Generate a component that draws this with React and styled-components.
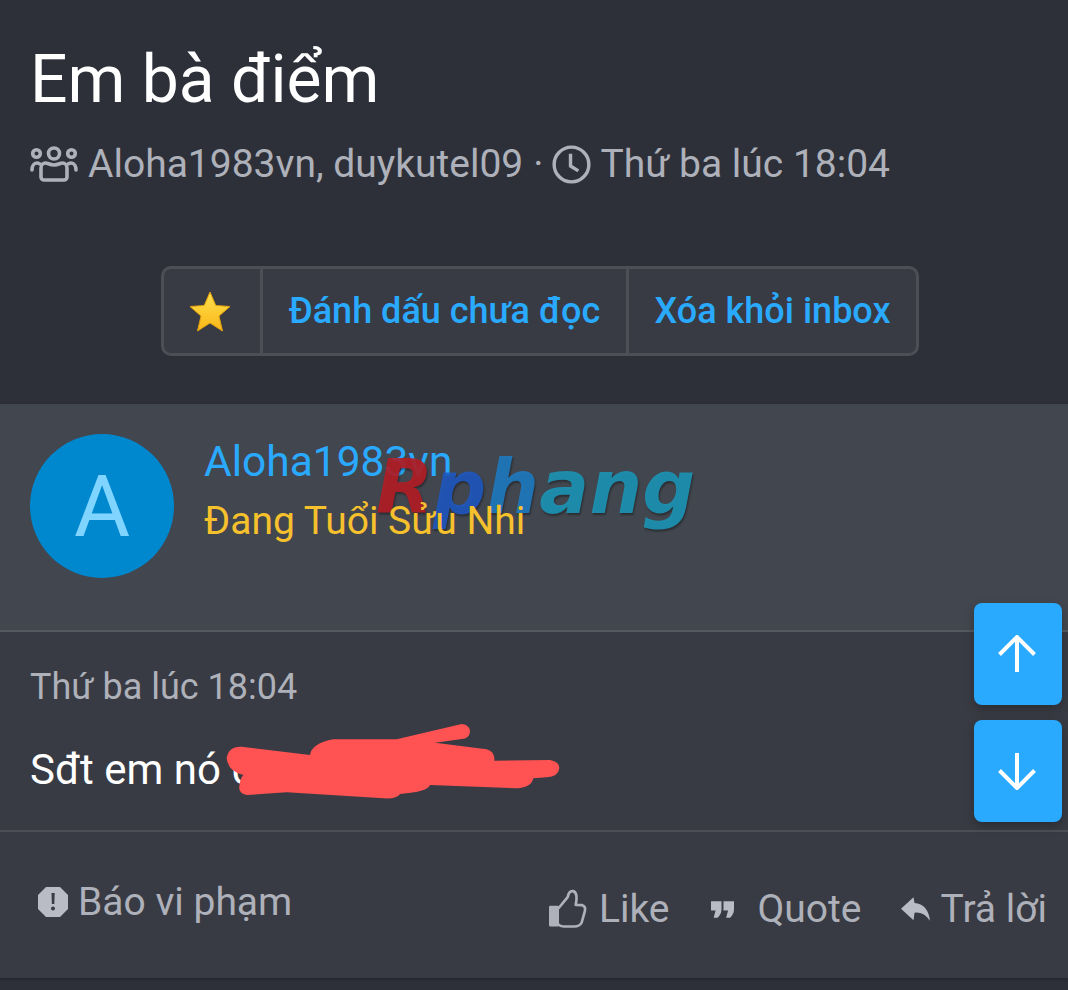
import React from 'react';
import styled, { createGlobalStyle } from 'styled-components';

const Global = createGlobalStyle`
  html, body { margin: 0; padding: 0; background: #24262b; }
  body { font-family: Roboto, "Noto Sans", sans-serif; }
`;
const Page = styled.div`
  width: 1068px; height: 990px; overflow: hidden; position: relative;
  background: #2d3039;
`;
const Header = styled.header`
  height: 404px; box-sizing: border-box; padding: 38px 30px 0 30px;
`;
const Title = styled.h1`
  margin: 0; font-size: 66px; line-height: 84px; font-weight: 400; color: #fff;
`;
const Meta = styled.div`
  margin-top: 17px; display: flex; align-items: center; gap: 10px;
  font-size: 39px; line-height: 50px; color: #aeb1b9;
`;
const Dot = styled.span` margin-right: -2px; `;
const Buttons = styled.div`
  margin: 77px 0 0 131px; width: 758px; height: 90px; box-sizing: border-box;
  display: flex; border: 3px solid #4c4f56; border-radius: 10px; background: #383b43;
`;
const StarCell = styled.div`
  width: 99px; padding-right: 5px; display: flex; align-items: center; justify-content: center;
  border-right: 3px solid #4c4f56; box-sizing: border-box;
`;
const LinkCell = styled.a`
  display: flex; align-items: center; justify-content: center; box-sizing: border-box;
  width: ${p => p.$w}px; color: #2aaaff; font-size: 36px; font-weight: 500;
  border-right: ${p => (p.$last ? 'none' : '3px solid #4c4f56')};
`;
const Card = styled.article`
  height: 574px; background: #383b43; display: flex; flex-direction: column;
  box-shadow: 0 1px 3px rgba(0,0,0,.3);
`;
const UserHead = styled.section`
  position: relative; box-sizing: border-box; background: #42464e;
  padding: 30px; display: flex; gap: 30px;
  border-bottom: 2px solid #55585f; flex: none; height: 228px;
`;
const Avatar = styled.div`
  width: 144px; height: 144px; border-radius: 50%; background: #0088cf; color: #7fd5ff;
  display: flex; align-items: center; justify-content: center; font-size: 86px; flex: none;
`;
const UserInfo = styled.div` display: flex; flex-direction: column; `;
const UserName = styled.div`
  color: #2aaaff; font-size: 42.5px; line-height: 56px;
`;
const UserRank = styled.div`
  position: relative; z-index: 1;
  color: #f6c12d; font-size: 39px; line-height: 50px; margin-top: 6px;
`;
const Watermark = styled.div`
  position: absolute; left: 376px; top: 38px; font-family: "DejaVu Sans", sans-serif;
  font-size: 74px; line-height: 90px; font-weight: 700; font-style: italic; letter-spacing: .2px;
  text-shadow: 1px 2px 2px rgba(0,0,0,.35); white-space: nowrap;
`;
const WmPart = styled.span` color: ${p => p.$c}; `;
const Body = styled.section`
  position: relative; height: 200px; box-sizing: border-box; padding: 31px 30px 0;
  border-bottom: 2px solid #4c4f56; flex: none;
`;
const Time = styled.div` color: #aeb1b9; font-size: 36px; line-height: 48px; `;
const Message = styled.div` color: #fff; font-size: 42px; line-height: 56px; margin-top: 31px; `;
const Scribble = styled.svg`
  position: absolute; left: 200px; top: 78px; width: 380px; height: 100px;
`;
const Footer = styled.footer`
  flex: 1; display: flex; justify-content: space-between; align-items: flex-start;
  padding: 45px 21px 0 38px;
`;
const Action = styled.span`
  display: inline-flex; align-items: center; gap: ${p => p.$gap}px;
  color: #aeb1b9; font-size: 39px; line-height: 50px;
  margin-right: ${p => p.$after || 0}px;
`;
const Right = styled.div` display: flex; gap: 39px; margin-top: 7px; `;
const Float = styled.button`
  position: absolute; left: 974px; top: ${p => p.$top}px; width: 88px; height: 102px;
  border: none; padding: 0 2px 0 0; border-radius: 8px; background: #2aaaff;
  box-shadow: 0 4px 10px rgba(0,0,0,.25);
  display: flex; align-items: center; justify-content: center;
`;

const Users = () => (
  <svg width="48" height="36" viewBox="0 0 48 36" fill="none" stroke="#aeb1b9" strokeWidth="3.600">
    <circle cx="24" cy="7.500" r="5.500" />
    <circle cx="6.500" cy="7.500" r="3.800" />
    <circle cx="41.500" cy="7.500" r="3.800" />
    <path d="M11 22c0-3 2-5 4.500-5 2.500 0 4 2 8.500 2s6-2 8.500-2c2.500 0 4.500 2 4.500 5v9c0 2-1.500 3-3 3H14c-1.500 0-3-1-3-3z" />
    <path d="M2 24c0-4 2-7 5-7 1 0 2 .5 3 1M46 24c0-4-2-7-5-7-1 0-2 .5-3 1" strokeLinecap="round" />
  </svg>
);
const Clock = () => (
  <svg width="39" height="39" viewBox="0 0 40 40" fill="none" stroke="#aeb1b9" strokeWidth="3.500">
    <circle cx="20" cy="20" r="17.800" />
    <path d="M19 9v12.500l8 5" />
  </svg>
);
const Star = () => (
  <svg width="42" height="42" viewBox="0 0 42 42">
    <defs>
      <linearGradient id="st" x1="0" y1="0" x2="0" y2="1">
        <stop offset="0" stopColor="#ffe14d" />
        <stop offset="1" stopColor="#f9b618" />
      </linearGradient>
    </defs>
    <path d="M21 2l5.800 13.500 14.200 1-11 9.500 3.500 15-12.500-8-12.500 8 3.500-15-11-9.500 14.200-1z" fill="url(#st)" stroke="#e0a010" strokeWidth="1" strokeLinejoin="round" />
  </svg>
);
const Octagon = () => (
  <svg width="30" height="30" viewBox="0 0 30 30">
    <path d="M8 0h14l8 8v14l-8 8H8l-8-8V8z" fill="#b9bcc4" />
    <path d="M13.500 6h3.200l-.4 11h-2.400z" fill="#383b43" />
    <circle cx="15" cy="21.500" r="2" fill="#383b43" />
  </svg>
);
const Thumb = () => (
  <svg width="40" height="42" viewBox="55 35 120 125" fill="none" stroke="#aeb1b9" strokeWidth="8" strokeLinejoin="round">
    <path d="M62 92h22v54H62z" fill="#aeb1b9" />
    <path d="M86 96L114 62Q118 42 130 44Q146 48 138 85L158 86Q170 90 165 106L156 138Q150 150 134 150H102Q92 150 84 142" />
  </svg>
);
const Quote = () => (
  <svg width="23" height="17" viewBox="60 58 70 50" fill="#b9bcc4">
    <path d="M60 58h32v24q0 14-12 26h-12l6-22h-14z" />
    <path d="M98 58h32v24q0 14-12 26h-12l6-22h-14z" />
  </svg>
);
const Reply = () => (
  <svg width="29" height="24" viewBox="630 48 88 72" fill="#b9bcc4">
    <path d="M630 83L668 48L671 66Q712 70 718 120Q700 92 671 95L668 118Z" />
  </svg>
);
const Arrow = ({ up }) => (
  <svg width="38" height="38" viewBox="0 0 38 38" fill="none" stroke="#fff" strokeWidth="4" style={up ? undefined : { transform: 'rotate(180deg)' }}>
    <path d="M19 37V2M1.500 19.500L19 2l17.500 17.500" />
  </svg>
);

export default function App() {
  return (
    <Page>
      <Global />
      <Header>
        <Title>Em bà điểm</Title>
        <Meta>
          <Users />
          <span>Aloha1983vn, duykutel09</span>
          <Dot>·</Dot>
          <Clock />
          <span>Thứ ba lúc 18:04</span>
        </Meta>
        <Buttons>
          <StarCell><Star /></StarCell>
          <LinkCell $w={366}>Đánh dấu chưa đọc</LinkCell>
          <LinkCell $w={287} $last>Xóa khỏi inbox</LinkCell>
        </Buttons>
      </Header>
      <Card>
        <UserHead>
          <Avatar>A</Avatar>
          <UserInfo>
            <UserName>Aloha1983vn</UserName>
            <UserRank>Đang Tuổi Sửu Nhi</UserRank>
          </UserInfo>
          <Watermark>
            <WmPart $c="rgba(180,30,38,.9)">R</WmPart>
            <WmPart $c="rgba(30,90,200,.85)">p</WmPart>
            <WmPart $c="rgba(31,122,190,.92)">h</WmPart>
            <WmPart $c="rgba(28,147,179,.92)">ang</WmPart>
          </Watermark>
        </UserHead>
        <Body>
          <Time>Thứ ba lúc 18:04</Time>
          <Message>Sđt em nó 0</Message>
          <Scribble viewBox="0 0 1140 300">
            <path fill="#ff5252" d="M80 145Q85 108 125 110L330 135Q335 100 400 88L590 88L785 42Q810 45 810 65Q808 85 785 87L705 98L860 118Q885 125 883 152L1050 150Q1078 155 1078 175Q1075 200 1040 202L1000 205Q995 232 950 235L690 225Q685 245 600 252Q590 268 550 265L260 247L140 255Q115 250 118 230Q120 205 130 195Q85 185 80 145Z" />
          </Scribble>
        </Body>
        <Footer>
          <Action $gap={10}><Octagon />Báo vi phạm</Action>
          <Right>
            <Action $gap={11} $after={2}><Thumb />Like</Action>
            <Action $gap={24}><Quote />Quote</Action>
            <Action $gap={11}><Reply />Trả lời</Action>
          </Right>
        </Footer>
      </Card>
      <Float $top={603}><Arrow up /></Float>
      <Float $top={720}><Arrow /></Float>
    </Page>
  );
}
